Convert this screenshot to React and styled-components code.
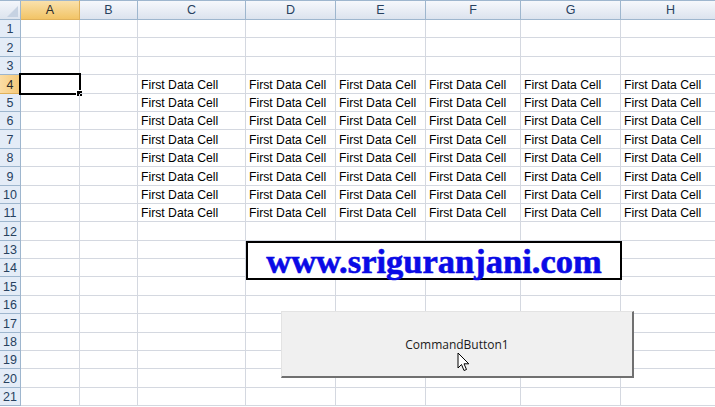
import React from 'react';
import styled, { createGlobalStyle } from 'styled-components';

const GlobalStyle = createGlobalStyle`
  html, body {
    margin: 0;
    padding: 0;
    background: #fff;
    overflow: hidden;
  }
`;

const COLUMNS = [
  { name: 'A', width: 59 },
  { name: 'B', width: 58 },
  { name: 'C', width: 108 },
  { name: 'D', width: 90 },
  { name: 'E', width: 90 },
  { name: 'F', width: 95 },
  { name: 'G', width: 100 },
  { name: 'H', width: 100 },
];

const ROW_COUNT = 21;
const DATA_ROWS = [4, 5, 6, 7, 8, 9, 10, 11];
const DATA_COLS = ['C', 'D', 'E', 'F', 'G', 'H'];

const Sheet = styled.div`
  position: relative;
  width: 715px;
  height: 407px;
  overflow: hidden;
  font-family: 'Liberation Sans', Arial, sans-serif;
`;

const Grid = styled.div`
  display: grid;
  grid-template-columns: 21px ${COLUMNS.map((c) => `${c.width}px`).join(' ')};
  grid-template-rows: 20px repeat(${ROW_COUNT}, 18.4px);
`;

const Corner = styled.div`
  position: relative;
  background: linear-gradient(#f3f6fb, #dde4ee);
  border-right: 1px solid #9eb6ce;
  border-bottom: 1px solid #9eb6ce;
  border-top: 1px solid #9eb6ce;

  &::after {
    content: '';
    position: absolute;
    right: 2px;
    bottom: 2px;
    width: 0;
    height: 0;
    border-left: 11px solid transparent;
    border-bottom: 11px solid #c6d2e2;
  }
`;

const ColHeader = styled.div`
  display: flex;
  align-items: center;
  justify-content: center;
  font-size: 12.5px;
  color: ${(p) => (p.$active ? '#2a2a2a' : '#27415f')};
  background: ${(p) =>
    p.$active
      ? 'linear-gradient(#fae1ac, #f2c466)'
      : 'linear-gradient(#f6f8fc, #dce3ee)'};
  border-top: 1px solid #9eb6ce;
  border-right: 1px solid ${(p) => (p.$active ? '#e0b15a' : '#9eb6ce')};
  border-bottom: 1px solid ${(p) => (p.$active ? '#e0b15a' : '#9eb6ce')};
`;

const RowHeader = styled.div`
  display: flex;
  align-items: flex-end;
  justify-content: center;
  padding-bottom: 1px;
  font-size: 12.5px;
  color: ${(p) => (p.$active ? '#2a2a2a' : '#27415f')};
  background: ${(p) => (p.$active ? 'linear-gradient(90deg, #fbdca4, #f5c978)' : '#e4ecf7')};
  border-right: 1px solid ${(p) => (p.$active ? '#e0b15a' : '#9eb6ce')};
  border-bottom: 1px solid ${(p) => (p.$active ? '#e0b15a' : '#9eb6ce')};
`;

const Cell = styled.div`
  position: relative;
  display: flex;
  align-items: flex-end;
  padding: 0 0 1px 3px;
  font-size: 12.2px;
  color: #000;
  white-space: nowrap;
  overflow: visible;
  border-right: 1px solid #d4d8e0;
  border-bottom: 1px solid #d4d8e0;
`;

const ActiveBorder = styled.div`
  position: absolute;
  left: -2px;
  top: -2px;
  right: -2px;
  bottom: -2px;
  border: 2px solid #000;
  pointer-events: none;

  &::after {
    content: '';
    position: absolute;
    right: -4px;
    bottom: -4px;
    width: 5px;
    height: 5px;
    background: #000;
    border: 1px solid #fff;
  }
`;

const UrlBanner = styled.div`
  position: absolute;
  left: 246px;
  top: 241px;
  width: 376px;
  height: 39px;
  box-sizing: border-box;
  padding-top: 2px;
  background: #fff;
  border: 2px solid #000;
  display: flex;
  align-items: center;
  justify-content: center;
  font-family: 'Liberation Serif', 'Times New Roman', serif;
  font-weight: bold;
  font-size: 34.5px;
  color: #0a0ae6;
  -webkit-text-stroke: 0.6px #0a0ae6;
`;

const CommandButton = styled.div`
  position: absolute;
  left: 281px;
  top: 311px;
  width: 350px;
  height: 64px;
  background: #f0f0f0;
  border: 1px solid #e3e3e3;
  border-right: 2px solid #707070;
  border-bottom: 2px solid #707070;
  display: flex;
  align-items: center;
  justify-content: center;
  font-family: 'Open Sans', 'Liberation Sans', sans-serif;
  font-size: 12px;
  color: #1a1a1a;
`;

const Pointer = styled.svg`
  position: absolute;
  left: 457px;
  top: 352px;
`;

function App() {
  const rows = [];
  rows.push(<Corner key="corner" />);
  COLUMNS.forEach((c) => {
    rows.push(
      <ColHeader key={`h-${c.name}`} $active={c.name === 'A'}>
        {c.name}
      </ColHeader>
    );
  });

  for (let r = 1; r <= ROW_COUNT; r += 1) {
    rows.push(
      <RowHeader key={`r-${r}`} $active={r === 4}>
        {r}
      </RowHeader>
    );
    COLUMNS.forEach((c) => {
      const hasData = DATA_ROWS.includes(r) && DATA_COLS.includes(c.name);
      const isActive = r === 4 && c.name === 'A';
      rows.push(
        <Cell key={`${c.name}${r}`}>
          {hasData ? 'First Data Cell' : null}
          {isActive ? <ActiveBorder /> : null}
        </Cell>
      );
    });
  }

  return (
    <Sheet>
      <GlobalStyle />
      <Grid>{rows}</Grid>
      <UrlBanner>www.sriguranjani.com</UrlBanner>
      <CommandButton>CommandButton1</CommandButton>
      <Pointer width="13" height="21" viewBox="0 0 13 21">
        <path
          d="M1 1 L1 16 L4.5 12.5 L7 18.5 L9.5 17.5 L7 11.8 L11.8 11.8 Z"
          fill="#fff"
          stroke="#000"
          strokeWidth="1"
          strokeLinejoin="miter"
        />
      </Pointer>
    </Sheet>
  );
}

export default App;
